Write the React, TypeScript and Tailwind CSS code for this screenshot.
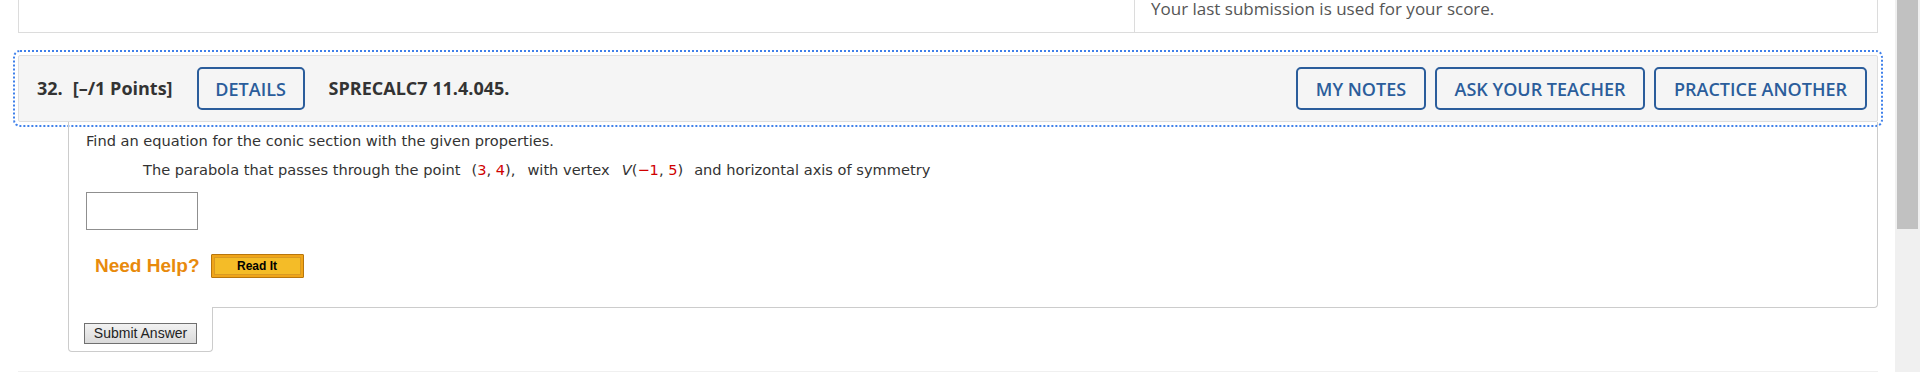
import React from "react";

const HeaderButton: React.FC<{ label: string; width: string }> = ({ label, width }) => (
  <button
    className={`${width} h-[43px] border-2 border-[#2b5d9b] rounded-[5px] text-[18px] font-semibold text-[#2b5d9b] leading-none`}
  >
    {label}
  </button>
);

const Red: React.FC<{ children: React.ReactNode }> = ({ children }) => (
  <span className="text-[#d00000]">{children}</span>
);

const App: React.FC = () => {
  return (
    <div className="w-[1920px] h-[372px] overflow-hidden bg-white flex">
      <div className="w-[1895px] flex flex-col">
        {/* previous question tail */}
        <div className="ml-[18px] w-[1860px] h-[33px] flex border-l border-r border-b border-[#dcdcdc] font-['Open_Sans',sans-serif]">
          <div className="w-[1116px] border-r border-[#dcdcdc]" />
          <div className="pl-[16px] text-[17px] leading-[17px] text-[#555]">
            Your last submission is used for your score.
          </div>
        </div>

        {/* question header */}
        <div className="ml-[18px] mt-[22px] w-[1860px] h-[67px] flex items-center pl-[18px] pr-[10px] bg-[#f5f5f5] border border-[#dedede] rounded-[2px] outline-2 outline-dotted outline-offset-[3px] outline-[#3f80ea] font-['Open_Sans',sans-serif] text-[#333]">
          <span className="text-[18px] font-bold">32.</span>
          <span className="ml-[10px] text-[18px] font-bold">[–/1 Points]</span>
          <div className="ml-[24px]">
            <HeaderButton label="DETAILS" width="w-[108px]" />
          </div>
          <span className="ml-[24px] text-[18px] font-bold">SPRECALC7 11.4.045.</span>
          <div className="ml-auto flex gap-[9px]">
            <HeaderButton label="MY NOTES" width="w-[130px]" />
            <HeaderButton label="ASK YOUR TEACHER" width="w-[210px]" />
            <HeaderButton label="PRACTICE ANOTHER" width="w-[213px]" />
          </div>
        </div>

        {/* question body */}
        <div className="ml-[68px] w-[1810px] border-l border-r border-b border-[#cccccc] rounded-br-[4px] pl-[17px] pt-[10px] pb-[29px] font-['DejaVu_Sans',Verdana,sans-serif] text-[14.6px] text-[#333]">
          <p className="leading-[18px]">Find an equation for the conic section with the given properties.</p>
          <p className="ml-[57px] mt-[11px] leading-[18px] whitespace-nowrap">
            The parabola that passes through the point
            <span className="ml-[11px]">
              (<Red>3</Red>, <Red>4</Red>)
            </span>
            ,<span className="ml-[12px]">with vertex</span>
            <span className="ml-[12px]">
              <i>V</i>(<Red>−1</Red>, <Red>5</Red>)
            </span>
            <span className="ml-[11px]">and horizontal axis of symmetry</span>
          </p>
          <input
            type="text"
            className="block mt-[13px] w-[112px] h-[38px] border border-[#8f8f8f] bg-white"
          />
          <div className="mt-[24px] ml-[9px] h-[24px] flex items-center">
            <span className="font-['Liberation_Sans',Arial,sans-serif] text-[19px] font-bold text-[#e88a0c]">
              Need Help?
            </span>
            <button className="ml-[11px] w-[93px] h-[24px] p-[2px] bg-[#f0a519] border border-[#b8760c] rounded-[1px]">
              <div className="h-full flex items-center justify-center bg-[#f4bc28] border border-[#d99a22] font-['Liberation_Sans',Arial,sans-serif] text-[12px] font-bold text-black leading-none">
                Read It
              </div>
            </button>
          </div>
        </div>

        {/* submit tab */}
        <div className="ml-[68px] -mt-px w-[145px] h-[45px] bg-white border-l border-r border-b border-[#cccccc] rounded-b-[4px] pl-[15px] pt-[13px]">
          <button className="w-[113px] h-[21px] border border-[#707070] bg-gradient-to-b from-[#f2f2f2] to-[#dadada] font-['Liberation_Sans',Arial,sans-serif] text-[14px] text-[#222] leading-none">
            Submit Answer
          </button>
        </div>

        <div className="ml-[18px] mt-[19px] w-[1860px] border-t border-[#f0f0f0]" />
      </div>

      {/* scrollbar */}
      <div className="w-[25px] h-full bg-[#f0f0f0] px-[2px]">
        <div className="h-[229px] bg-[#c1c1c1]" />
      </div>
    </div>
  );
};

export default App;
